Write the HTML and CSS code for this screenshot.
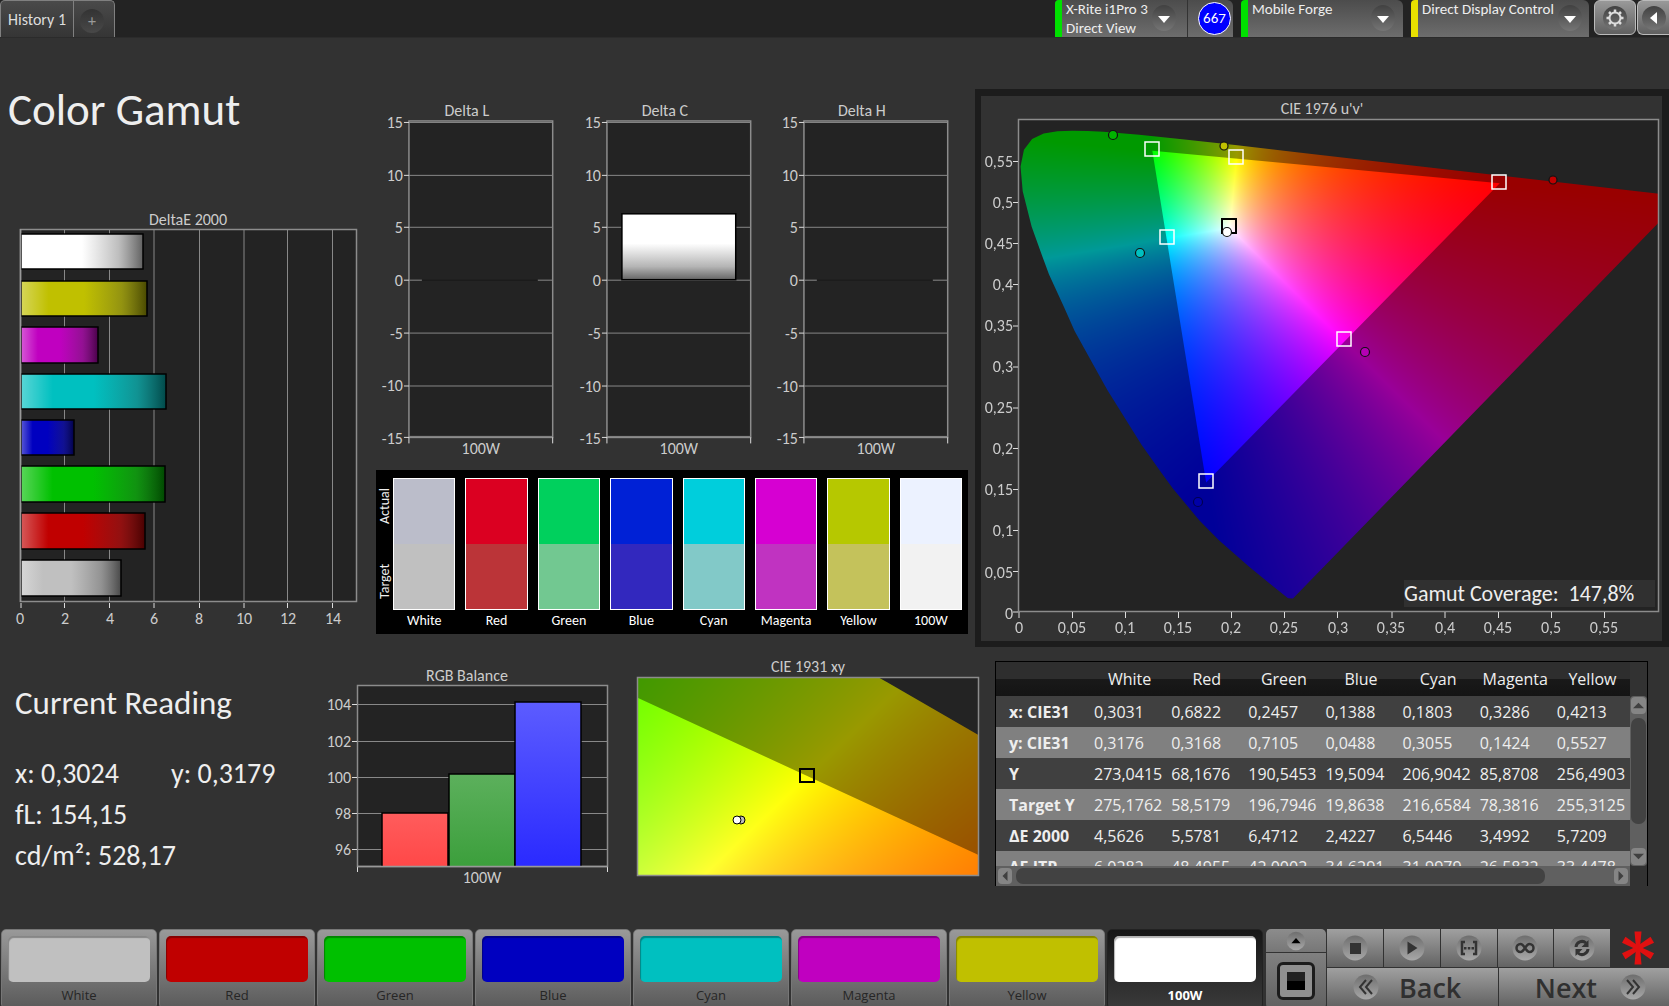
FILE: index.html
```html
<!DOCTYPE html>
<html lang="en">
<head>
<meta charset="utf-8">
<title>Color Gamut</title>
<link rel="stylesheet" href="styles.css">
</head>
<body>
<svg width="0" height="0" class="defs" aria-hidden="true">
  <defs>
    <linearGradient id="shine"><stop offset="0" stop-color="#fff" stop-opacity=".35"/><stop offset=".22" stop-color="#fff" stop-opacity="0"/><stop offset=".5" stop-color="#444" stop-opacity="0"/><stop offset=".8" stop-color="#333" stop-opacity=".32"/><stop offset="1" stop-color="#000" stop-opacity=".62"/></linearGradient>
    <linearGradient id="fade" x1="0" y1="0" x2="0" y2="1"><stop offset=".45" stop-color="#fff"/><stop offset=".8" stop-color="#b5b5b5"/><stop offset="1" stop-color="#666"/></linearGradient>
    <linearGradient id="r" x1="0" y1="0" x2="0" y2="1"><stop offset="0" stop-color="#ff5c5c"/><stop offset="1" stop-color="#ff4848"/></linearGradient>
    <linearGradient id="g" x1="0" y1="0" x2="0" y2="1"><stop offset="0" stop-color="#5cb05c"/><stop offset="1" stop-color="#3c9f3c"/></linearGradient>
    <linearGradient id="b" x1="0" y1="0" x2="0" y2="1"><stop offset="0" stop-color="#5c5cff"/><stop offset="1" stop-color="#2a2aff"/></linearGradient>
    <linearGradient id="disc" x1="0" y1="0" x2="0" y2="1"><stop offset="0" stop-color="#6e6e6e"/><stop offset="1" stop-color="#a8a8a8"/></linearGradient>
    <linearGradient id="well" x1="0" y1="0" x2="0" y2="1"><stop offset="0" stop-color="#414141"/><stop offset="1" stop-color="#757575"/></linearGradient>
  </defs>
</svg>

<header class="topbar">
  <nav class="tabs">
    <button class="tab">History 1</button>
    <button class="tab tab-add" aria-label="Add history"><span class="knob">+</span></button>
  </nav>
  <div class="devices">
    <div class="device meter">
      <button class="device-main green"><span>X-Rite i1Pro 3<br>Direct View</span><svg class="drop" viewBox="0 0 24 26"><ellipse cx="12" cy="13" rx="12" ry="13"/><path d="M6 11h12l-6 7z"/></svg></button>
      <span class="badge-cell"><span class="badge">667</span></span>
    </div>
    <button class="device source green"><span>Mobile Forge</span><svg class="drop" viewBox="0 0 24 26"><ellipse cx="12" cy="13" rx="12" ry="13"/><path d="M6 11h12l-6 7z"/></svg></button>
    <button class="device display yellow"><span>Direct Display Control</span><svg class="drop" viewBox="0 0 24 26"><ellipse cx="12" cy="13" rx="12" ry="13"/><path d="M6 11h12l-6 7z"/></svg></button>
    <button class="square" aria-label="Settings"><svg viewBox="0 0 26 26"><circle class="disc" cx="13" cy="13" r="12"/><circle cx="13" cy="13" r="5.500" fill="none" stroke="#ddd" stroke-width="2"/><path d="M13 4.500v3M13 18.500v3M4.500 13h3M18.500 13h3M7 7l2 2M17 17l2 2M7 19l2-2M17 9l2-2" stroke="#ddd" stroke-width="2.500"/></svg></button>
    <button class="square last" aria-label="Collapse"><svg viewBox="0 0 26 26"><circle class="disc" cx="13" cy="13" r="12"/><path d="M16 7v12l-7-6z" fill="#fff"/></svg></button>
  </div>
</header>

<main>
<section class="upper">
  <div class="left">
    <h1>Color Gamut</h1>
    <svg class="chart" viewBox="0 0 370 425" role="img" aria-label="DeltaE 2000">
      <text x="188" y="15" class="mid">DeltaE 2000</text>
      <rect x="20.500" y="19.500" width="336" height="372" class="plot"/>
      <path class="grid" d="M64.500 20v372M109.500 20v372M154 20v372M199.500 20v372M244 20v372M287.500 20v372M332.500 20v372"/>
      <path class="tick" d="M21 393v5M64.500 393v5M109.500 393v5M154 393v5M199.500 393v5M244 393v5M287.500 393v5M332.500 393v5"/>
      <g stroke="none">
        <path fill="#fff" d="M21 24h122v35H21z"/><path fill="#c0c000" d="M21 71h126v35H21z"/><path fill="#c000c0" d="M21 117h77v36H21z"/><path fill="#00c0c0" d="M21 164h145v35H21z"/><path fill="#0000c0" d="M21 210h53v35H21z"/><path fill="#00c000" d="M21 256h144v36H21z"/><path fill="#c00000" d="M21 303h124v36H21z"/><path fill="#c0c0c0" d="M21 350h100v36H21z"/>
      </g>
      <g fill="url(#shine)" stroke="#000" stroke-width="1.500">
        <rect x="21" y="24" width="122" height="35"/><rect x="21" y="71" width="126" height="35"/><rect x="21" y="117" width="77" height="36"/><rect x="21" y="164" width="145" height="35"/><rect x="21" y="210" width="53" height="35"/><rect x="21" y="256" width="144" height="36"/><rect x="21" y="303" width="124" height="36"/><rect x="21" y="350" width="100" height="36"/>
      </g>
      <path d="M20.500 19v373" class="axis"/>
      <g class="mid"><text x="20" y="414">0</text><text x="65" y="414">2</text><text x="110" y="414">4</text><text x="154" y="414">6</text><text x="199" y="414">8</text><text x="244" y="414">10</text><text x="288" y="414">12</text><text x="333" y="414">14</text></g>
    </svg>
  </div>

  <div class="middle">
    <div class="deltas">
      <svg class="chart" viewBox="0 0 198 370" role="img" aria-label="Delta L">
        <text x="97" y="16" class="mid">Delta L</text>
        <rect x="39" y="21" width="144" height="317" class="plot"/>
        <path class="grid" d="M39 22.500h144M39 75.500h144M39 127.500h144M39 180.500h13M168 180.500h15M39 233.500h144M39 286.500h144M39 337h144"/>
        <path d="M52 180.500h116" stroke="#191919"/>
        <path class="tick" d="M34 22.500h5M34 75.500h5M34 127.500h5M34 180.500h5M34 233.500h5M34 286.500h5M34 338h5M39 338v6M183 338v6"/>
        <g class="end"><text x="33" y="28">15</text><text x="33" y="81">10</text><text x="33" y="133">5</text><text x="33" y="186">0</text><text x="33" y="239">-5</text><text x="33" y="292">-10</text><text x="33" y="345">-15</text></g>
        <text x="111" y="355" class="mid">100W</text>
      </svg>
      <svg class="chart" viewBox="0 0 198 370" role="img" aria-label="Delta C">
        <text x="97" y="16" class="mid">Delta C</text>
        <rect x="39" y="21" width="144" height="317" class="plot"/>
        <path class="grid" d="M39 22.500h144M39 75.500h144M39 127.500h144M39 180.500h144M39 233.500h144M39 286.500h144M39 337h144"/>
        <path class="tick" d="M34 22.500h5M34 75.500h5M34 127.500h5M34 180.500h5M34 233.500h5M34 286.500h5M34 338h5M39 338v6M183 338v6"/>
        <rect x="54" y="114" width="114" height="66" fill="url(#fade)" stroke="#000" stroke-width="1.500"/>
        <g class="end"><text x="33" y="28">15</text><text x="33" y="81">10</text><text x="33" y="133">5</text><text x="33" y="186">0</text><text x="33" y="239">-5</text><text x="33" y="292">-10</text><text x="33" y="345">-15</text></g>
        <text x="111" y="355" class="mid">100W</text>
      </svg>
      <svg class="chart" viewBox="0 0 198 370" role="img" aria-label="Delta H">
        <text x="97" y="16" class="mid">Delta H</text>
        <rect x="39" y="21" width="144" height="317" class="plot"/>
        <path class="grid" d="M39 22.500h144M39 75.500h144M39 127.500h144M39 180.500h13M168 180.500h15M39 233.500h144M39 286.500h144M39 337h144"/>
        <path d="M52 180.500h116" stroke="#191919"/>
        <path class="tick" d="M34 22.500h5M34 75.500h5M34 127.500h5M34 180.500h5M34 233.500h5M34 286.500h5M34 338h5M39 338v6M183 338v6"/>
        <g class="end"><text x="33" y="28">15</text><text x="33" y="81">10</text><text x="33" y="133">5</text><text x="33" y="186">0</text><text x="33" y="239">-5</text><text x="33" y="292">-10</text><text x="33" y="345">-15</text></g>
        <text x="111" y="355" class="mid">100W</text>
      </svg>
    </div>
    <div class="compare">
      <div class="sides"><span>Actual</span><span>Target</span></div>
      <figure><div class="pair" style="--a:#bbbdca;--t:#c0c0c0"></div><figcaption>White</figcaption></figure>
      <figure><div class="pair" style="--a:#db0021;--t:#bb3438"></div><figcaption>Red</figcaption></figure>
      <figure><div class="pair" style="--a:#00d05d;--t:#72c891"></div><figcaption>Green</figcaption></figure>
      <figure><div class="pair" style="--a:#0021d6;--t:#3228be"></div><figcaption>Blue</figcaption></figure>
      <figure><div class="pair" style="--a:#00cedc;--t:#82c9c8"></div><figcaption>Cyan</figcaption></figure>
      <figure><div class="pair" style="--a:#d600d2;--t:#c033c1"></div><figcaption>Magenta</figcaption></figure>
      <figure><div class="pair" style="--a:#b6c800;--t:#c4c25b"></div><figcaption>Yellow</figcaption></figure>
      <figure><div class="pair" style="--a:#ecf2ff;--t:#f2f2f2"></div><figcaption>100W</figcaption></figure>
    </div>
  </div>

  <div class="gamut">
    <svg class="chart" viewBox="0 0 681 545" role="img" aria-label="CIE 1976 u'v'">
      <text x="341" y="18" class="mid">CIE 1976 u'v'</text>
      <rect x="38" y="24" width="640" height="492" fill="#232323"/>
      <foreignObject x="38" y="24" width="640" height="492"><canvas id="uv" width="640" height="492"></canvas></foreignObject>
      <rect x="37.500" y="23.500" width="640" height="492" class="frame"/>
      <g transform="translate(38 24)">
        <g fill="none" stroke="#fff" stroke-width="1.500">
          <rect x="126" y="22" width="14" height="14"/><rect x="210" y="30" width="14" height="14"/><rect x="473" y="55" width="14" height="14"/><rect x="141" y="110" width="14" height="14"/><rect x="318" y="212" width="14" height="14"/><rect x="180" y="354" width="14" height="14"/>
          <rect x="203" y="99" width="14" height="14" stroke="#000" stroke-width="2"/>
        </g>
        <g stroke="#111" stroke-width="1.200">
          <circle cx="94" cy="15" r="4.500" fill="#00b400"/><circle cx="205" cy="26" r="4" fill="#c0c000"/><circle cx="534" cy="60" r="4" fill="#c00000"/><circle cx="121" cy="133" r="4.500" fill="#00c0c0"/><circle cx="346" cy="232" r="4.500" fill="#b400b4"/><circle cx="179" cy="382" r="4.500" fill="#0000a8" stroke="#000050"/><circle cx="208" cy="112" r="4.500" fill="#fff"/>
        </g>
        <rect x="385" y="460" width="251" height="27" fill="#303030"/>
        <text x="385" y="481" class="coverage" xml:space="preserve">Gamut Coverage:  147,8%</text>
      </g>
      <path class="tick" d="M32 65.500h5M32 106.500h5M32 147.500h5M32 188.500h5M32 230h5M32 271h5M32 312h5M32 352.500h5M32 393.500h5M32 434.500h5M32 475.500h5M32 516h5M38 516v6M91.500 516v6M144.500 516v6M197.500 516v6M250.500 516v6M303.500 516v6M356.500 516v6M411 516v6M464 516v6M517.500 516v6M570.500 516v6M623.500 516v6"/>
      <g class="end"><text x="32" y="71">0,55</text><text x="32" y="112">0,5</text><text x="32" y="153">0,45</text><text x="32" y="194">0,4</text><text x="32" y="235">0,35</text><text x="32" y="276">0,3</text><text x="32" y="317">0,25</text><text x="32" y="358">0,2</text><text x="32" y="399">0,15</text><text x="32" y="440">0,1</text><text x="32" y="482">0,05</text><text x="32" y="523">0</text></g>
      <g class="mid"><text x="38" y="537">0</text><text x="91" y="537">0,05</text><text x="144" y="537">0,1</text><text x="197" y="537">0,15</text><text x="250" y="537">0,2</text><text x="303" y="537">0,25</text><text x="357" y="537">0,3</text><text x="410" y="537">0,35</text><text x="464" y="537">0,4</text><text x="517" y="537">0,45</text><text x="570" y="537">0,5</text><text x="623" y="537">0,55</text></g>
    </svg>
  </div>
</section>

<section class="lower">
  <div class="reading">
    <h2>Current Reading</h2>
    <p><span class="x">x: 0,3024</span><span>y: 0,3179</span></p>
    <p>fL: 154,15</p>
    <p>cd/m²: 528,17</p>
  </div>
  <svg class="chart" viewBox="0 0 287 235" role="img" aria-label="RGB Balance">
    <text x="142" y="26" class="mid">RGB Balance</text>
    <rect x="32.500" y="30.500" width="250" height="181" class="plot"/>
    <path class="grid" d="M33 49.500h250M33 86.500h250M33 122.500h250M33 158.500h250M33 194.500h250"/>
    <path class="tick" d="M27 49.500h5M27 86.500h5M27 122.500h5M27 158.500h5M27 194.500h5M32.500 212v5M282.500 212v5"/>
    <g stroke="#000" stroke-width="1.500"><path d="M57 211v-53h66v53" fill="url(#r)"/><path d="M124 211v-92h66v92" fill="url(#g)"/><path d="M190 211v-164h66v164" fill="url(#b)"/></g>
    <path d="M32 211.500h251" class="axis"/>
    <g class="end"><text x="26" y="55">104</text><text x="26" y="92">102</text><text x="26" y="128">100</text><text x="26" y="164">98</text><text x="26" y="200">96</text></g>
    <text x="157" y="228" class="mid">100W</text>
  </svg>
  <svg class="chart" viewBox="0 0 372 235" role="img" aria-label="CIE 1931 xy">
    <text x="196" y="17" class="mid">CIE 1931 xy</text>
    <rect x="25" y="22" width="341" height="198" fill="#232323"/>
    <foreignObject x="25" y="22" width="341" height="198"><canvas id="xy" width="341" height="198"></canvas></foreignObject>
    <rect x="25.500" y="22.500" width="341" height="198" class="frame"/>
    <rect x="188" y="114" width="14" height="13" fill="none" stroke="#000" stroke-width="2"/>
    <circle cx="129" cy="165" r="4" fill="#bbb" stroke="#000"/><circle cx="125" cy="165" r="4" fill="#fff" stroke="#000"/>
  </svg>
  <div class="data">
    <div class="table-view">
      <table>
        <thead><tr><th></th><th>White</th><th>Red</th><th>Green</th><th>Blue</th><th>Cyan</th><th>Magenta</th><th>Yellow</th></tr></thead>
        <tbody>
          <tr><th>x: CIE31</th><td>0,3031</td><td>0,6822</td><td>0,2457</td><td>0,1388</td><td>0,1803</td><td>0,3286</td><td>0,4213</td></tr>
          <tr><th>y: CIE31</th><td>0,3176</td><td>0,3168</td><td>0,7105</td><td>0,0488</td><td>0,3055</td><td>0,1424</td><td>0,5527</td></tr>
          <tr><th>Y</th><td>273,0415</td><td>68,1676</td><td>190,5453</td><td>19,5094</td><td>206,9042</td><td>85,8708</td><td>256,4903</td></tr>
          <tr><th>Target Y</th><td>275,1762</td><td>58,5179</td><td>196,7946</td><td>19,8638</td><td>216,6584</td><td>78,3816</td><td>255,3125</td></tr>
          <tr><th>ΔE 2000</th><td>4,5626</td><td>5,5781</td><td>6,4712</td><td>2,4227</td><td>6,5446</td><td>3,4992</td><td>5,7209</td></tr>
          <tr><th>ΔE ITP</th><td>6,0282</td><td>48,4955</td><td>42,0002</td><td>34,6291</td><td>31,9979</td><td>26,5832</td><td>33,4478</td></tr>
        </tbody>
      </table>
    </div>
    <div class="vbar"><button aria-label="Scroll up"><svg viewBox="0 0 12 12"><path d="M0 9l6-6 6 6z"/></svg></button><div class="track"><div class="thumb"></div></div><button aria-label="Scroll down"><svg viewBox="0 0 12 12"><path d="M0 3l6 6 6-6z"/></svg></button></div>
    <div class="hbar"><button aria-label="Scroll left"><svg viewBox="0 0 12 12"><path d="M9 0L3 6l6 6z"/></svg></button><div class="track"><div class="thumb"></div></div><button aria-label="Scroll right"><svg viewBox="0 0 12 12"><path d="M3 0l6 6-6 6z"/></svg></button></div>
  </div>
</section>
</main>

<footer class="dock">
  <button class="patch"><i style="background:#c0c0c0"></i>White</button>
  <button class="patch"><i style="background:#c00000"></i>Red</button>
  <button class="patch"><i style="background:#00c000"></i>Green</button>
  <button class="patch"><i style="background:#0000c0"></i>Blue</button>
  <button class="patch"><i style="background:#00c0c0"></i>Cyan</button>
  <button class="patch"><i style="background:#c000c0"></i>Magenta</button>
  <button class="patch"><i style="background:#c0c000"></i>Yellow</button>
  <button class="patch current"><i style="background:#fff"></i>100W</button>
  <div class="pattern">
    <button aria-label="More patterns"><svg viewBox="0 0 26 26"><circle class="disc" cx="13" cy="13" r="12"/><path d="M7 16h12l-6-7z"/></svg></button>
    <button aria-label="Window pattern"><span class="window"><b></b></span></button>
  </div>
  <div class="transport">
    <div class="steps">
      <button aria-label="Stop"><svg viewBox="0 0 26 26"><circle class="disc" cx="13" cy="13" r="12.500"/><path d="M8 8h11v11H8z"/></svg></button>
      <button aria-label="Play"><svg viewBox="0 0 26 26"><circle class="disc" cx="13" cy="13" r="12.500"/><path d="M8.500 6.500v13l10-6.500z"/></svg></button>
      <button aria-label="Step"><svg viewBox="0 0 26 26"><circle class="disc" cx="13" cy="13" r="12.500"/><path d="M9 7H6v12h3M17 7h3v12h-3" fill="none" stroke="#333" stroke-width="2.500"/><path d="M8 12h2.500v2.500H8zM11.800 12h2.500v2.500h-2.500zM15.500 12H18v2.500h-2.500z"/></svg></button>
      <button aria-label="Loop"><svg viewBox="0 0 26 26"><circle class="disc" cx="13" cy="13" r="12.500"/><path d="M13 13c-2-3-3-4-4.500-4a4 4 0 0 0 0 8c1.500 0 2.500-1 4.500-4s3-4 4.500-4a4 4 0 0 1 0 8c-1.500 0-2.500-1-4.500-4z" fill="none" stroke="#333" stroke-width="2.500"/></svg></button>
      <button aria-label="Repeat"><svg viewBox="0 0 26 26"><circle class="disc" cx="13" cy="13" r="12.500"/><path d="M7 12a6 6 0 0 1 10-4M19 14a6 6 0 0 1-10 4" fill="none" stroke="#333" stroke-width="3"/><path d="M19.500 5v7h-7zM6.500 21v-7h7z"/></svg></button>
      <svg class="star" viewBox="0 0 36 38"><g fill="#e01010"><path id="arm" d="M12.500 2.500h7l-1.500 16.500h-4z"/><use href="#arm" transform="rotate(60 16 19)"/><use href="#arm" transform="rotate(120 16 19)"/><use href="#arm" transform="rotate(180 16 19)"/><use href="#arm" transform="rotate(240 16 19)"/><use href="#arm" transform="rotate(300 16 19)"/></g></svg>
    </div>
    <div class="pages">
      <button class="back"><svg viewBox="0 0 26 26"><circle class="disc" cx="13" cy="13" r="12.500"/><path d="M13 6l-6 7 6 7M19 6l-6 7 6 7" fill="none" stroke="#333" stroke-width="2"/></svg>Back</button>
      <button class="next">Next<svg viewBox="0 0 26 26"><circle class="disc" cx="13" cy="13" r="12.500"/><path d="M7 6l6 7-6 7M13 6l6 7-6 7" fill="none" stroke="#333" stroke-width="2"/></svg></button>
    </div>
  </div>
</footer>
<script src="diagrams.js"></script>
</body>
</html>
```

FILE: styles.css
```css
* { box-sizing: border-box; }
body {
  margin: 0;
  min-height: 100vh;
  display: flex;
  flex-direction: column;
  background: #323232;
  color: #eee;
  font-family: Calibri, Carlito, Lato, sans-serif;
  font-size: 16px;
  overflow-x: hidden;
}
.defs { position: absolute; }
button {
  margin: 0;
  padding: 0;
  border: 0;
  background: none;
  color: inherit;
  font: inherit;
}
svg { display: block; }
.disc { fill: url(#disc); }

/* top bar */
.topbar {
  display: flex;
  justify-content: space-between;
  height: 38px;
  background: #232323;
  border-bottom: 1px solid #2b2b2b;
}
.tabs { display: flex; height: 37px; }
.tab {
  width: 74px;
  border: 1px solid #808080;
  border-bottom: 0;
  border-radius: 5px 0 0 0;
  background: linear-gradient(#4a4a4a, #353535);
  color: #ddd;
  white-space: nowrap;
}
.tab-add { width: 41px; border-left: 0; border-radius: 0 5px 0 0; }
.knob {
  display: block;
  width: 24px;
  margin: 4px auto 0 6px;
  line-height: 24px;
  border-radius: 50%;
  background: linear-gradient(#333, #484848);
  color: #999;
}
.devices { display: flex; height: 37px; }
.device {
  display: flex;
  height: 37px;
  border-radius: 4px 6px 0 0;
  background: linear-gradient(#4c4c4c, #6d6d6d);
  overflow: hidden;
}
.device-main { display: flex; width: 133px; border-right: 1px solid #333; }
.green { border-left: 7px solid #00e000; }
.yellow { border-left: 7px solid #e8e000; }
.device span { line-height: 19px; text-align: left; padding-left: 4px; white-space: nowrap; font-size: 15px; }
.drop { width: 24px; height: 26px; margin: 5px 11px 0 auto; flex: none; }
.drop ellipse { fill: url(#well); }
.drop path { fill: #fff; }
.meter { width: 178px; margin-right: 8px; }
.source { width: 162px; margin-right: 8px; }
.display { width: 178px; margin-right: 5px; }
.device .badge-cell { display: flex; padding: 2px 0 0 10px; }
.device .badge {
  width: 33px;
  height: 33px;
  padding: 0;
  line-height: 31px;
  text-align: center;
  border: 1px solid #fff;
  border-radius: 50%;
  background: #00f;
  color: #fff;
}
.display .drop { margin-right: 7px; }
.source .drop { margin-right: 8px; }
.square {
  width: 42px;
  height: 35px;
  margin-right: 1px;
  border: 1px solid #bbb;
  border-radius: 6px;
  background: linear-gradient(#999, #606060);
}
.square svg { width: 26px; height: 26px; margin: 0 auto; }
.square .disc { fill: url(#well); }
.square.last { width: 32px; margin: 0; border-right: 0; border-radius: 6px 0 0 6px; }

/* charts */
main { flex: 1; }
.chart { width: 100%; height: auto; }
.chart text { fill: #ccc; font-size: 16px; }
.mid { text-anchor: middle; }
.end { text-anchor: end; }
.plot { fill: #232323; stroke: #8c8c8c; stroke-width: 1.5px; }
.frame { fill: none; stroke: #8c8c8c; stroke-width: 1.5px; }
.grid, .axis { fill: none; stroke: #888; }
.axis { stroke: #999; stroke-width: 1.5px; }
.tick { fill: none; stroke: #ddd; }
canvas { display: block; width: 100%; height: 100%; }

.upper {
  display: grid;
  grid-template-columns: 370fr 605fr 694fr;
}
h1, h2, p { margin: 0; font-weight: 400; }
h1 { padding: 46px 0 74px 8px; font-size: 45px; line-height: 52px; }
.middle { padding-top: 62px; }
.deltas { display: grid; grid-template-columns: 1fr 1fr 1fr; padding-right: 12px; }
.compare {
  display: grid;
  grid-template-columns: 7px repeat(8, 1fr);
  column-gap: 10px;
  margin: 1px 7px 0 6px;
  padding: 8px 6px 3px 0;
  height: 164px;
  background: #000;
}
.sides { display: flex; flex-direction: column; height: 132px; width: 17px; }
.sides span {
  flex: 1;
  writing-mode: vertical-rl;
  transform: rotate(180deg);
  line-height: 17px;
  text-align: center;
  font-size: 14px;
}
.sides span:first-child { padding-top: 10px; }
.sides span:last-child { padding-bottom: 8px; }
figure { margin: 0; }
.pair {
  height: 132px;
  border: 1px solid #fff;
  background: linear-gradient(var(--a) 50%, var(--t) 50%);
}
figcaption { line-height: 22px; text-align: center; color: #fff; font-size: 14px; }
.gamut {
  margin-top: 51px;
  border: 6px solid #1c1c1c;
  border-top-width: 7px;
  border-right-width: 7px;
}
.chart .coverage { font-size: 22px; fill: #eee; }

.lower {
  display: grid;
  grid-template-columns: 325fr 287fr 372fr 685fr;
  padding-top: 8px;
}
.reading { padding: 28px 0 0 15px; }
h2 { font-size: 33px; line-height: 40px; margin-bottom: 30px; }
.reading p { font-size: 28px; line-height: 41px; white-space: nowrap; }
.x { display: inline-block; width: 156px; }

/* data table */
.data {
  display: grid;
  grid-template-columns: 1fr 17px;
  grid-template-rows: 204px 20px;
  align-self: start;
  margin: 6px 21px 0 11px;
  border: 1px solid #000;
  border-bottom: 0;
  font-family: "Open Sans", "Noto Sans", sans-serif;
  font-size: 16px;
}
.table-view { overflow: hidden; }
table { width: 100%; table-layout: fixed; border-collapse: collapse; }
td, th { padding: 0; height: 31px; text-align: left; white-space: nowrap; }
td { padding-left: 4px; }
thead th { height: 34px; padding-left: 2px; text-align: center; font-weight: 400; }
thead tr { background: linear-gradient(#2e2e2e 50%, #191919 50%, #141414); }
thead th:first-child { width: 94px; }
tbody tr { background: #404040; }
tbody tr:nth-child(even) { background: #808080; }
tbody th { padding-left: 13px; font-weight: 700; }
.vbar {
  display: flex;
  flex-direction: column;
  gap: 4px;
  margin-top: 34px;
  padding: 1px;
  border-radius: 4px;
  background: #606060;
}
.hbar {
  display: flex;
  gap: 4px;
  padding: 2px;
  background: #606060;
}
.vbar button, .hbar button { padding: 2px; border-radius: 4px; background: #858585; }
.vbar button { height: 17px; }
.hbar button { width: 14px; }
.vbar svg, .hbar svg { width: 100%; height: 100%; fill: #404040; }
.track { flex: 1; }
.thumb { border-radius: 7px; background: #424242; }
.vbar .thumb { height: 84%; }
.hbar .thumb { width: 89%; height: 100%; }

/* bottom dock */
.dock {
  display: grid;
  grid-template-columns: repeat(8, 158fr) 63fr 342fr;
  height: 77px;
  font-family: "Open Sans", "Noto Sans", sans-serif;
}
.patch {
  display: flex;
  flex-direction: column;
  margin: 0 1px;
  padding: 6px 6px 0;
  border: 1px solid #777;
  border-radius: 5px;
  background: linear-gradient(#999, #5a5a5a);
  color: #262626;
  font-size: 13px;
  line-height: 26px;
}
.patch i {
  width: 100%;
  height: 46px;
  border-radius: 5px;
  box-shadow: inset 1px 2px 1px rgba(0, 0, 0, .3);
}
.patch.current { background: linear-gradient(#161616, #3a3a3a); border-color: #222; color: #fff; font-weight: 700; }
.pattern { display: grid; grid-template-rows: 23px 1fr; margin: 0 1px 0 2px; gap: 1px; }
.pattern button {
  display: grid;
  place-items: center;
  border-radius: 5px 5px 0 0;
  background: linear-gradient(#8c8c8c, #777);
}
.pattern button + button { border-radius: 0 0 5px 5px; background: linear-gradient(#808080, #606060); }
.pattern svg { width: 20px; height: 20px; }
.window {
  display: grid;
  place-items: center;
  width: 38px;
  height: 38px;
  border: 3px solid #1c1c1c;
  border-radius: 6px;
  background: #909090;
}
.window b { width: 18px; height: 18px; background: linear-gradient(#222 50%, #000 50%); }
.transport { display: grid; grid-template-rows: 38px 38px; gap: 1px; }
.steps { display: grid; grid-template-columns: repeat(5, 56fr) 58fr; column-gap: 1px; }
.steps button, .pages button { background: linear-gradient(#a0a0a0, #636363); }
.steps svg { width: 26px; height: 26px; margin: 0 auto; fill: #333; }
.steps .star { width: 36px; height: 38px; }
.pages { display: grid; grid-template-columns: 1fr 1fr; gap: 1px; }
.pages button { display: flex; align-items: center; color: #303030; font-size: 27px; font-weight: 600; }
.pages svg { width: 26px; height: 26px; }
.back { gap: 20px; padding-left: 26px; }
.next { gap: 23px; justify-content: flex-end; padding-right: 23px; }
```

FILE: diagrams.js
```js
// Spectral locus, x and y pairs
const LOCUS = [
  [.1741, .0050], [.1714, .0051], [.1644, .0109], [.1566, .0177], [.1440, .0297], [.1355, .0399], [.1241, .0578],
  [.1188, .0680], [.1096, .0868], [.0913, .1327], [.0829, .1576], [.0687, .2007], [.0602, .2360], [.0454, .2950],
  [.0372, .3380], [.0235, .4127], [.0082, .5384],
  [.0039, .6548], [.0139, .7502], [.0389, .8120], [.0743, .8338], [.1142, .8262], [.1547, .8059],
  [.1929, .7816], [.2296, .7543], [.3016, .6923], [.3731, .6245], [.4441, .5547], [.5125, .4866],
  [.5752, .4242], [.6270, .3725], [.6915, .3083], [.7347, .2653]
];
const REC709 = [[.64, .33], [.30, .60], [.15, .06]];

const toUV = ([x, y]) => {
  const d = -2 * x + 12 * y + 3;
  return [4 * x / d, 9 * y / d];
};
const fromUV = ([u, v]) => {
  const d = 6 * u - 16 * v + 12;
  return [9 * u / d, 4 * v / d];
};

// Linear RGB of a chromaticity, scaled so its largest channel is full
function colour([x, y]) {
  const X = x / y, Z = (1 - x - y) / y;
  const rgb = [
    3.2406 * X - 1.5372 - 0.4986 * Z,
    -0.9689 * X + 1.8758 + 0.0415 * Z,
    0.0557 * X - 0.2040 + 1.0570 * Z
  ].map(c => Math.max(0, c));
  const top = Math.max(...rgb);
  return rgb.map(c => 255 * c / top);
}

function draw(id, [x0, x1, y0, y1], project, unproject) {
  const canvas = document.getElementById(id);
  const ctx = canvas.getContext('2d');
  const w = canvas.width, h = canvas.height;
  const image = ctx.createImageData(w, h);
  for (let j = 0; j < h; j++) {
    for (let i = 0; i < w; i++) {
      const p = [x0 + (i + .5) / w * (x1 - x0), y1 - (j + .5) / h * (y1 - y0)];
      const c = colour(unproject(p));
      image.data.set([c[0], c[1], c[2], 255], 4 * (j * w + i));
    }
  }
  ctx.putImageData(image, 0, 0);

  const trace = points => {
    points.map(project).forEach(([a, b], n) => {
      const px = (a - x0) / (x1 - x0) * w, py = (y1 - b) / (y1 - y0) * h;
      n ? ctx.lineTo(px, py) : ctx.moveTo(px, py);
    });
    ctx.closePath();
  };
  ctx.beginPath();
  ctx.rect(0, 0, w, h);
  trace(REC709);
  ctx.fillStyle = 'rgba(0, 0, 0, .4)';
  ctx.fill('evenodd');

  ctx.globalCompositeOperation = 'destination-in';
  ctx.fillStyle = '#000';
  ctx.beginPath();
  trace(LOCUS);
  ctx.fill();
}

draw('uv', [0, .6, 0, .6], toUV, fromUV);
draw('xy', [.3668, .4718, .4528, .5578], p => p, p => p);
```
